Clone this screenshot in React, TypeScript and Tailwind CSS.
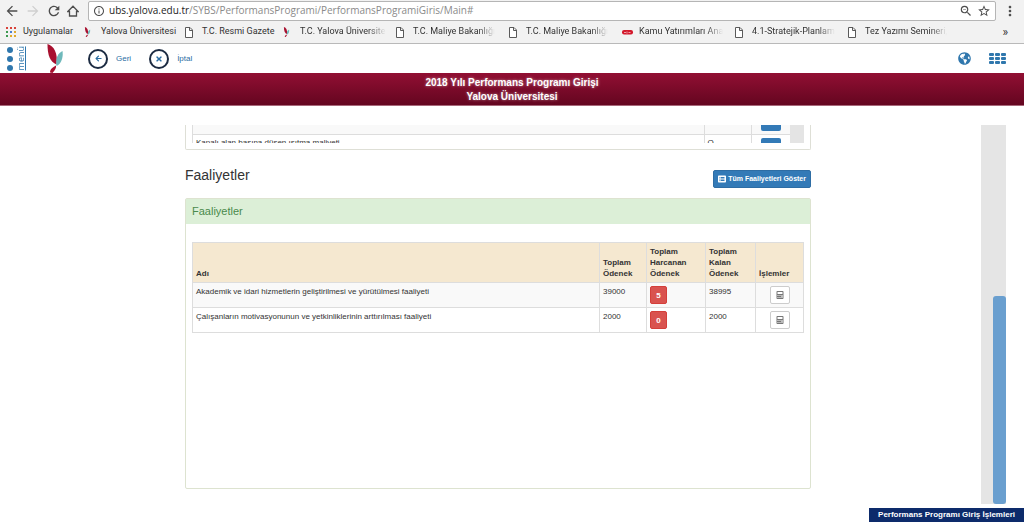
import type { ReactNode } from "react";
import { FaGlobeAmericas, FaCalculator, FaListAlt, FaArrowLeft, FaTimes } from "react-icons/fa";
import { MdArrowBack, MdArrowForward, MdRefresh, MdStarBorder, MdMoreVert, MdZoomOut, MdInfoOutline } from "react-icons/md";

function Leaf({ className }: { className: string }) {
  return (
    <svg viewBox="0 0 16 29" className={className} aria-hidden="true">
      <path d="M0.5 0 C7 2 11 9 9.500 20.500 C3 18 0.500 11 0.5 0Z" fill="#a8102f" />
      <path d="M15.500 7 C16.500 14 14 20 9.500 22 C8.500 15 10 10 15.500 7Z" fill="#6fb9bb" />
      <path d="M9 21.500 C9.500 24 8 26 5.500 29 L3 28.500 C3 25 5.500 23.500 9 21.500Z" fill="#a8102f" />
    </svg>
  );
}

function PageIcon() {
  return (
    <svg viewBox="0 0 8 11" className="h-[11px] w-2" fill="#fff" stroke="#5a5a5a" aria-hidden="true">
      <path d="M.5.5h4.500l2.500 2.500v7.500h-7zM4.500.5v3h3" />
    </svg>
  );
}

function AppsIcon() {
  const colors = ["#d8423a", "#d8423a", "#d8423a", "#3d9a50", "#4a7fd0", "#e0a92c", "#3d9a50", "#e0a92c", "#e0a92c"];
  return (
    <svg viewBox="0 0 10 10" className="size-[10px]" aria-hidden="true">
      {colors.map((c, i) => (
        <rect key={i} x={(i % 3) * 4} y={Math.floor(i / 3) * 4} width="2" height="2" fill={c} />
      ))}
    </svg>
  );
}

function StampIcon() {
  return (
    <svg viewBox="0 0 11 5" className="h-[5px] w-[11px]" aria-hidden="true">
      <rect width="11" height="4.500" rx="2" fill="#d3182b" />
      <path d="M2 2.500h2m1-1v2m1.500-1h2" stroke="#fff" strokeWidth=".6" />
    </svg>
  );
}

type Bookmark = { label: string; icon: ReactNode; width: string; fade?: boolean };

const bookmarks: Bookmark[] = [
  { label: "Uygulamalar", icon: <AppsIcon />, width: "w-[78px]" },
  { label: "Yalova Üniversitesi", icon: <Leaf className="h-[10px] w-[7px]" />, width: "w-[101px]" },
  { label: "T.C. Resmi Gazete", icon: <PageIcon />, width: "w-[98px]" },
  { label: "T.C. Yalova Üniversite", icon: <Leaf className="h-[10px] w-[7px]" />, width: "w-[113px]", fade: true },
  { label: "T.C. Maliye Bakanlığı", icon: <PageIcon />, width: "w-[113px]", fade: true },
  { label: "T.C. Maliye Bakanlığı", icon: <PageIcon />, width: "w-[113px]", fade: true },
  { label: "Kamu Yatırımları Ana", icon: <StampIcon />, width: "w-[113px]", fade: true },
  { label: "4.1-Stratejik-Planlam", icon: <PageIcon />, width: "w-[113px]", fade: true },
  { label: "Tez Yazımı Semineri,", icon: <PageIcon />, width: "w-[113px]", fade: true },
];

function BrowserBar() {
  return (
    <div className="border-b border-[#b9b9b9] bg-[#f2f2f2]">
      <div className="flex h-[21px] items-center font-['Open_Sans','Noto_Sans',sans-serif] text-[#4d4d4d]">
        <div className="flex w-[88px] shrink-0 items-center gap-[5px] pl-1">
          <button aria-label="Back"><MdArrowBack className="size-4" /></button>
          <button aria-label="Forward" className="text-[#cfcfcf]"><MdArrowForward className="size-4" /></button>
          <button aria-label="Reload"><MdRefresh className="size-4" /></button>
          <button aria-label="Home">
            <svg viewBox="0 0 12 12" className="size-3" fill="none" stroke="currentColor" strokeWidth="1.3">
              <path d="M.8 6.500 6 1.200l5.200 5.300H9.500v4.500h-7V6.500z" />
            </svg>
          </button>
        </div>
        <div className="flex h-5 min-w-0 flex-1 items-center gap-1 rounded-xs border border-[#b5b5b5] bg-white px-1">
          <MdInfoOutline className="size-3 shrink-0" />
          <p className="min-w-0 flex-1 truncate text-[10px] text-[#8a8a8a]">
            <span className="text-[#222]">ubs.yalova.edu.tr</span>/SYBS/PerformansProgrami/PerformansProgramiGiris/Main#
          </p>
          <button aria-label="Zoom"><MdZoomOut className="size-[14px]" /></button>
          <button aria-label="Bookmark"><MdStarBorder className="size-[14px]" /></button>
        </div>
        <button aria-label="Menu" className="flex w-7 justify-center"><MdMoreVert className="size-4" /></button>
      </div>
      <nav className="flex h-[22px] items-center pl-[6px] font-['Roboto','Noto_Sans',sans-serif] text-[9px] text-[#333]">
        {bookmarks.map((b, i) => (
          <a key={i} href="#" className={`${b.width} flex shrink-0 items-center`}>
            <span className="flex w-[17px] shrink-0">{b.icon}</span>
            <span className={b.fade ? "whitespace-nowrap mask-r-from-80% mask-r-to-100%" : "whitespace-nowrap"}>
              {b.label}
            </span>
          </a>
        ))}
        <button className="ml-auto pr-4 text-[12px]" aria-label="More bookmarks">»</button>
      </nav>
    </div>
  );
}

function RoundAction({ label, icon }: { label: string; icon: ReactNode }) {
  return (
    <button className="flex items-center gap-2 text-[8px] text-[#2a6da3]">
      <span className="flex size-5 items-center justify-center rounded-full border-2 border-[#1c2b42]">{icon}</span>
      {label}
    </button>
  );
}

function AppHeader() {
  return (
    <header className="flex h-[29px] items-center bg-white">
      <button className="ml-[7px] flex items-center gap-1 text-[#2f77ad]">
        <span className="flex flex-col gap-[3px]">
          <span className="size-[6px] rounded-full bg-current" />
          <span className="size-[6px] rounded-full bg-current" />
          <span className="size-[6px] rounded-full bg-current" />
        </span>
        <span className="rotate-180 border-l border-current font-['Open_Sans',sans-serif] text-[9px] leading-[8px] [writing-mode:vertical-rl]">menü</span>
      </button>
      <Leaf className="ml-[21px] h-[29px] w-4" />
      <div className="ml-[25px] flex gap-[18px]">
        <RoundAction label="Geri" icon={<FaArrowLeft className="size-[7px]" />} />
        <RoundAction label="İptal" icon={<FaTimes className="size-2" />} />
      </div>
      <div className="mr-[18px] ml-auto flex items-center gap-[18px] text-[#2f77ad]">
        <button aria-label="Language"><FaGlobeAmericas className="size-[13px]" /></button>
        <button aria-label="Applications" className="grid grid-cols-3 gap-px">
          {Array.from({ length: 9 }, (_, i) => (
            <span key={i} className="h-[3px] w-[5px] rounded-[1px] bg-current" />
          ))}
        </button>
      </div>
    </header>
  );
}

const rows = [
  { name: "Akademik ve idari hizmetlerin geliştirilmesi ve yürütülmesi faaliyeti", total: 39000, spent: 5, left: 38995 },
  { name: "Çalışanların motivasyonunun ve yetkinliklerinin arttırılması faaliyeti", total: 2000, spent: 0, left: 2000 },
];

const cell = "border border-[#ddd] px-[3px]";

function IndicatorPanel() {
  return (
    <section className="rounded-b-xs border border-t-0 border-[#dedfd6] px-[6px] pb-[6px]">
      <div className="flex h-[18px] overflow-hidden">
        <table className="-mt-4 flex-1 table-fixed border-collapse self-start text-[8px] leading-[11px]">
          <colgroup>
            <col />
            <col className="w-[47px]" />
            <col className="w-[39px]" />
          </colgroup>
          <tbody>
            {["", "Kapalı alan başına düşen ısıtma maliyeti"].map((text, i) => (
              <tr key={i} className="h-[25px] odd:bg-[#f9f9f9]">
                <td className={`${cell} pt-[2px] align-top`}>{text}</td>
                <td className={`${cell} pt-[2px] align-top`}>{text && "O"}</td>
                <td className="border-y border-[#ddd] pt-[3px] align-top">
                  <button aria-label="Detay" className="ml-[9px] block h-[18px] w-5 rounded-xs bg-[#337ab7]" />
                </td>
              </tr>
            ))}
          </tbody>
        </table>
        <div className="w-[14px] bg-[#e4e4e4]" />
      </div>
    </section>
  );
}

function ActivityTable() {
  return (
    <table className="w-full table-fixed border-collapse text-left text-[8px] leading-[11px] text-[#333]">
      <colgroup>
        <col />
        <col className="w-[47px]" />
        <col className="w-[59px]" />
        <col className="w-[50px]" />
        <col className="w-[48px]" />
      </colgroup>
      <thead>
        <tr className="h-10 bg-[#f5e8d0] align-bottom">
          {["Adı", "Toplam Ödenek", "Toplam Harcanan Ödenek", "Toplam Kalan Ödenek", "İşlemler"].map((h) => (
            <th key={h} scope="col" className={`${cell} pb-[3px] font-bold`}>{h}</th>
          ))}
        </tr>
      </thead>
      <tbody>
        {rows.map((r) => (
          <tr key={r.name} className="h-[25px] align-top odd:bg-[#f9f9f9]">
            <td className={`${cell} pt-[3px]`}>{r.name}</td>
            <td className={`${cell} pt-[3px]`}>{r.total}</td>
            <td className={`${cell} pt-[3px]`}>
              <button className="block h-[18px] w-[17px] rounded-xs border border-[#d43f3a] bg-[#d9534f] font-bold text-white">{r.spent}</button>
            </td>
            <td className={`${cell} pt-[3px]`}>{r.left}</td>
            <td className={`${cell} pt-[3px]`}>
              <button aria-label="Hesapla" className="mx-auto flex h-[18px] w-5 items-center justify-center rounded-xs border border-[#ccc] bg-white">
                <FaCalculator className="size-2 text-[#777]" />
              </button>
            </td>
          </tr>
        ))}
      </tbody>
    </table>
  );
}

export default function App() {
  return (
    <div className="flex min-h-screen flex-col bg-white font-['Liberation_Sans',Arial,sans-serif] text-[#333]">
      <BrowserBar />
      <AppHeader />
      <div className="h-[33px] border-b border-[#a8687a] bg-linear-to-b from-[#920f33] to-[#640620] pt-[3px] text-center text-[10px] leading-[14px] font-bold text-white text-shadow-[0_0_3px_#ffffff90]">
        <h1>2018 Yılı Performans Programı Girişi</h1>
        <p>Yalova Üniversitesi</p>
      </div>
      <div className="mt-[19px] mb-1 flex flex-1 pr-[18px]">
        <div className="grid flex-1 grid-cols-[185fr_626fr_170fr]">
          <main className="col-start-2 flex flex-col pb-[15px]">
            <IndicatorPanel />
            <div className="mt-[20px] mb-[10px] flex h-[18px] items-center justify-between">
              <h2 className="-mt-2 text-[14px] leading-5">Faaliyetler</h2>
              <button className="flex h-[18px] items-center gap-[2px] rounded-xs border border-[#2e6da4] bg-[#337ab7] px-1 text-[7px] font-bold text-white">
                <FaListAlt className="size-2" />
                Tüm Faaliyetleri Göster
              </button>
            </div>
            <section className="flex-1 rounded-xs border border-[#dde3d0]">
              <h3 className="h-[25px] bg-[#dcefd7] px-[6px] text-[11px] leading-[25px] text-[#4a8a4c]">Faaliyetler</h3>
              <div className="px-[6px] pt-[18px]">
                <ActivityTable />
              </div>
            </section>
          </main>
        </div>
        <div className="flex w-[25px] flex-col items-end justify-end bg-[#e5e5e5]">
          <div className="h-[55%] w-[13px] rounded-[3px] bg-[#6a9fcf]" />
        </div>
      </div>
      <footer className="flex h-[14px] justify-end">
        <p className="bg-[#0d2b6b] px-[9px] text-[8px] leading-[14px] font-bold text-white">Performans Programı Giriş İşlemleri</p>
      </footer>
    </div>
  );
}
